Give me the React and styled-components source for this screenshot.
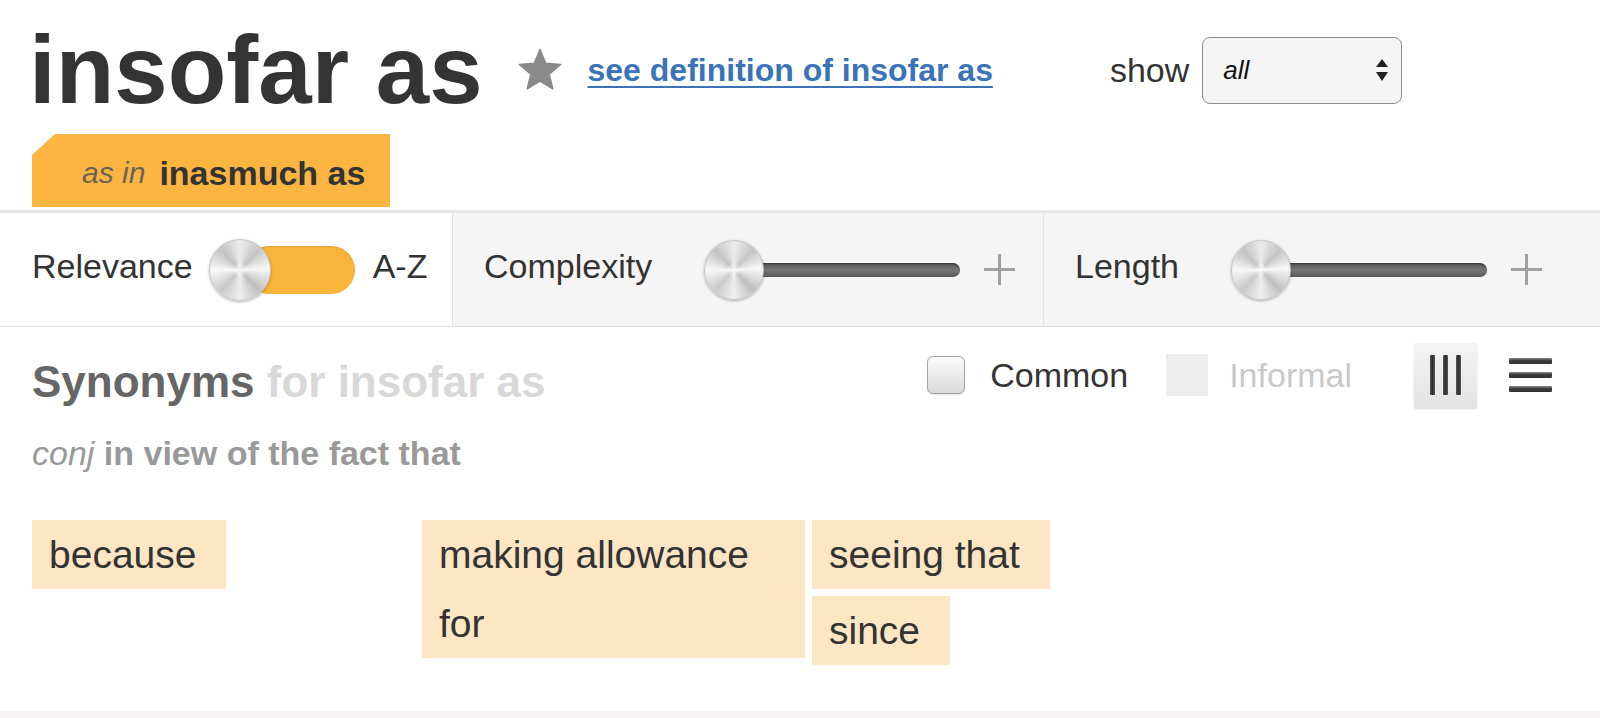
import React from 'react';
import styled, { createGlobalStyle } from 'styled-components';

const GlobalStyle = createGlobalStyle`
  body {
    margin: 0;
    background: #fff;
    font-family: "Liberation Sans", Arial, Helvetica, sans-serif;
    color: #333;
  }
`

const Page = styled.div`
  width: 100%;
  overflow: hidden;
`

const Header = styled.header`
  padding-top: 22px;
`
const TitleRow = styled.div`
  display: flex;
  align-items: center;
  height: 96px;
  padding-left: 29px;
`
const Title = styled.h1`
  margin: 0;
  font-size: 96px;
  line-height: 96px;
  font-weight: 700;
  color: #343434;
  white-space: nowrap;
`
const Star = styled.svg`
  margin-left: 34px;
  flex-shrink: 0;
`
const DefLink = styled.a`
  margin-left: 25px;
  font-size: 32px;
  font-weight: 700;
  color: #3b73b9;
  text-decoration: underline;
  text-decoration-thickness: 2px;
  text-underline-offset: 5px;
  white-space: nowrap;
`
const ShowLabel = styled.span`
  margin-left: 117px;
  font-size: 34px;
  color: #333;
`
const Select = styled.div`
  margin-left: 13px;
  width: 200px;
  height: 67px;
  box-sizing: border-box;
  display: flex;
  align-items: center;
  justify-content: space-between;
  padding: 0 11px 0 20px;
  border: 1.5px solid #8c8c8c;
  border-radius: 8px;
  background: #f5f5f5;
  font-size: 26px;
  font-style: italic;
  color: #111;
`
const Tag = styled.div`
  display: flex;
  align-items: center;
  width: fit-content;
  height: 73px;
  box-sizing: border-box;
  margin: 16px 0 3px 32px;
  padding: 5px 25px 0 50px;
  background: #fbb540;
  clip-path: polygon(23px 0, 100% 0, 100% 100%, 0 100%, 0 21px);
`
const AsIn = styled.span`
  font-size: 30px;
  font-style: italic;
  color: #6a6456;
  margin-right: 14px;
`
const Sense = styled.span`
  font-size: 34px;
  font-weight: 700;
  color: #333;
`

const Controls = styled.div`
  display: grid;
  grid-template-columns: 452px 591px 1fr;
  height: 113px;
  border-top: 3px solid #e6e6e6;
  border-bottom: 1px solid #e0e0e0;
`
const Panel = styled.div`
  display: flex;
  align-items: center;
  padding-left: ${p => (p.$first ? '32px' : '31px')};
  background: ${p => (p.$first ? '#fff' : '#f5f5f5')};
  border-left: ${p => (p.$first ? 'none' : '1px solid #e2e2e2')};
`
const Label = styled.span`
  font-size: 34px;
  color: #333;
  margin-bottom: 6px;
  white-space: nowrap;
`
const Toggle = styled.div`
  display: flex;
  align-items: center;
  margin: 0 18px 0 16px;
`
const Knob = styled.div`
  position: relative;
  z-index: 1;
  flex-shrink: 0;
  width: ${p => p.$size}px;
  height: ${p => p.$size}px;
  box-sizing: border-box;
  border-radius: 50%;
  border: 1px solid #c6c6c6;
  background:
    radial-gradient(circle, rgba(255,255,255,0.9) 0, rgba(255,255,255,0) 18%),
    conic-gradient(#ececec, #c4c4c4 12%, #f7f7f7 24%, #bfbfbf 38%, #efefef 50%, #c9c9c9 62%, #f8f8f8 75%, #c2c2c2 88%, #ececec);
  box-shadow: 0 1px 3px rgba(0, 0, 0, 0.3);
`
const Track = styled.div`
  width: 110px;
  height: 48px;
  margin-left: -26px;
  border-radius: 24px;
  background: #f9b43c;
  box-shadow: inset 0 1px 2px rgba(0, 0, 0, 0.12);
`
const Slider = styled.div`
  display: flex;
  align-items: center;
  margin-left: 52px;
`
const Bar = styled.div`
  width: 226px;
  height: 14px;
  margin-left: -30px;
  border-radius: 7px;
  background: linear-gradient(#555, #767676 50%, #5a5a5a);
  box-shadow: inset 0 1px 2px rgba(0, 0, 0, 0.4);
`
const Plus = styled.span`
  position: relative;
  width: 31px;
  height: 31px;
  margin-left: 24px;
  &::before,
  &::after {
    content: '';
    position: absolute;
    background: #a0a0a0;
  }
  &::before {
    left: 0;
    right: 0;
    top: 14px;
    height: 3px;
  }
  &::after {
    top: 0;
    bottom: 0;
    left: 14px;
    width: 3px;
  }
`

const Section = styled.section`
  padding: 0 48px 46px 32px;
`
const HeadRow = styled.div`
  display: flex;
  align-items: center;
  justify-content: space-between;
  height: 96px;
`
const Heading = styled.h2`
  margin: 13px 0 0;
  font-size: 44px;
  line-height: 44px;
  font-weight: 700;
  color: #666;
  white-space: nowrap;
`
const Faded = styled.span`
  color: #d8d8d8;
`
const Filters = styled.div`
  display: flex;
  align-items: center;
`
const Check = styled.span`
  flex-shrink: 0;
  width: ${p => (p.$off ? 42 : 38)}px;
  height: ${p => (p.$off ? 42 : 38)}px;
  box-sizing: border-box;
  margin-left: ${p => p.$gap || 0}px;
  border-radius: ${p => (p.$off ? 0 : 6)}px;
  border: ${p => (p.$off ? 'none' : '1.5px solid #a2a2a2')};
  background: ${p => (p.$off ? '#ededed' : 'linear-gradient(#fbfbfb, #dadada)')};
  box-shadow: ${p => (p.$off ? 'none' : '0 1px 1px rgba(0,0,0,0.1)')};
`
const FilterLabel = styled.span`
  margin-left: ${p => p.$gap}px;
  font-size: 34px;
  color: ${p => (p.$off ? '#c9c9c9' : '#333')};
`
const ViewButton = styled.button`
  display: flex;
  align-items: center;
  justify-content: center;
  gap: 8px;
  width: 63px;
  height: 65px;
  margin-left: 62px;
  padding: 0;
  border: none;
  border-radius: 2px;
  background: linear-gradient(#f4f4f4, #e3e3e3);
  box-shadow: 0 1px 2px rgba(0, 0, 0, 0.15);
`
const VBar = styled.span`
  width: 5px;
  height: 40px;
  border-radius: 1px;
  background: linear-gradient(90deg, #555, #2e2e2e 50%, #555);
`
const ListIcon = styled.div`
  display: flex;
  flex-direction: column;
  gap: 8px;
  width: 43px;
  margin-left: 32px;
`
const HBar = styled.span`
  height: 6px;
  border-radius: 1px;
  background: linear-gradient(#8a8a8a, #3a3a3a 45%, #333);
`
const Sub = styled.p`
  margin: 10px 0 0;
  font-size: 34px;
  line-height: 40px;
  color: #999;
  em {
    font-style: italic;
  }
  strong {
    font-weight: 700;
  }
`
const Tiles = styled.div`
  display: grid;
  grid-template-columns: repeat(3, 383px);
  column-gap: 7px;
  align-items: start;
  margin-top: 47px;
`
const Column = styled.div`
  display: flex;
  flex-direction: column;
  align-items: flex-start;
  gap: 7px;
`
const Tile = styled.span`
  display: block;
  max-width: 100%;
  box-sizing: border-box;
  padding: 0 30px 0 17px;
  background: #fde6c4;
  font-size: 39px;
  line-height: 69px;
  color: #333;
`
const Band = styled.div`
  height: 40px;
  background: #f4f2f2;
`

const columns = [
  ['because'],
  ['making allowance for'],
  ['seeing that', 'since'],
]

export default function App() {
  return (
    <Page>
      <GlobalStyle />
      <Header>
        <TitleRow>
          <Title>insofar as</Title>
          <Star width="46" height="44" viewBox="0 0 24 23">
            <polygon
              points="12,0.8 15,8 22.8,8.6 16.8,13.7 18.7,21.4 12,17.3 5.3,21.4 7.2,13.7 1.2,8.6 9,8"
              fill="#8a8a8a"
              stroke="#8a8a8a"
              strokeWidth="0.8"
              strokeLinejoin="round"
            />
          </Star>
          <DefLink href="#">see definition of insofar as</DefLink>
          <ShowLabel>show</ShowLabel>
          <Select>
            <span>all</span>
            <svg width="16" height="26" viewBox="0 0 16 26">
              <polygon points="2,10 14,10 8,2" fill="#222" />
              <polygon points="2,15 14,15 8,24" fill="#222" />
            </svg>
          </Select>
        </TitleRow>
        <Tag>
          <AsIn>as in</AsIn>
          <Sense>inasmuch as</Sense>
        </Tag>
      </Header>

      <Controls>
        <Panel $first>
          <Label>Relevance</Label>
          <Toggle>
            <Knob $size={62} />
            <Track />
          </Toggle>
          <Label>A-Z</Label>
        </Panel>
        <Panel>
          <Label>Complexity</Label>
          <Slider>
            <Knob $size={60} />
            <Bar />
          </Slider>
          <Plus />
        </Panel>
        <Panel>
          <Label>Length</Label>
          <Slider>
            <Knob $size={60} />
            <Bar />
          </Slider>
          <Plus />
        </Panel>
      </Controls>

      <Section>
        <HeadRow>
          <Heading>
            Synonyms <Faded>for insofar as</Faded>
          </Heading>
          <Filters>
            <Check />
            <FilterLabel $gap={25}>Common</FilterLabel>
            <Check $off $gap={38} />
            <FilterLabel $off $gap={21}>Informal</FilterLabel>
            <ViewButton aria-label="columns">
              <VBar />
              <VBar />
              <VBar />
            </ViewButton>
            <ListIcon>
              <HBar />
              <HBar />
              <HBar />
            </ListIcon>
          </Filters>
        </HeadRow>
        <Sub>
          <em>conj</em> <strong>in view of the fact that</strong>
        </Sub>
        <Tiles>
          {columns.map((col, i) => (
            <Column key={i}>
              {col.map(word => (
                <Tile key={word}>{word}</Tile>
              ))}
            </Column>
          ))}
        </Tiles>
      </Section>
      <Band />
    </Page>
  )
}
